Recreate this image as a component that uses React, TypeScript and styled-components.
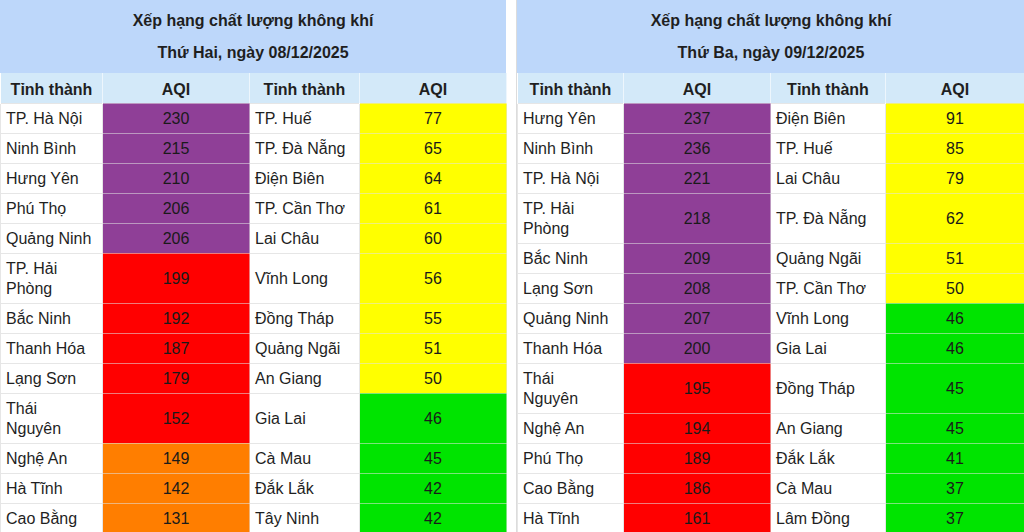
import React from "react";
import styled, { createGlobalStyle } from "styled-components";

const Global = createGlobalStyle`
  html, body { margin: 0; padding: 0; background: #ffffff; }
  body { font-family: "Liberation Sans", Arial, sans-serif; color: #1f1f1f; }
`;

type Level = "purple" | "red" | "orange" | "yellow" | "green";

const levelColor: Record<Level, string> = {
  purple: "#8f3f97",
  red: "#ff0000",
  orange: "#ff7e00",
  yellow: "#ffff00",
  green: "#00e400",
};

const level = (v: number): Level =>
  v >= 200 ? "purple" : v >= 150 ? "red" : v >= 100 ? "orange" : v >= 50 ? "yellow" : "green";

type Row = [string, number, string, number];

const Page = styled.div`
  display: flex;
  align-items: flex-start;
  gap: 10px;
  width: 1024px;
  height: 532px;
  overflow: hidden;
`;

const Panel = styled.div<{ $w: number; $divider?: boolean }>`
  width: ${(p) => p.$w}px;
  flex: none;
  border-left: ${(p) => (p.$divider ? "1px solid #dcdcdc" : "none")};
`;

const Title = styled.div`
  background: #bdd7fa;
  padding: 5px 0 4px;
  text-align: center;
  font-weight: bold;
  font-size: 16px;
`;

const TitleLine = styled.div`
  line-height: 32px;
  height: 32px;
`;

const Table = styled.table`
  width: 100%;
  border-collapse: collapse;
  table-layout: fixed;
  font-size: 16px;
`;

const HeadRow = styled.tr`
  height: 30px;
`;

const HeadCell = styled.th`
  background: #d3e9f9;
  padding: 4px 0 0;
  line-height: 20px;
  font-weight: bold;
  text-align: center;
  border-left: 1px solid rgba(255, 255, 255, 0.6);
  border-right: 1px solid rgba(255, 255, 255, 0.6);
`;

const NameCell = styled.td`
  background: #ffffff;
  padding: 5px 6px 4px 5px;
  line-height: 20px;
  text-align: left;
  vertical-align: middle;
  border: 1px solid #e6e6e6;
`;

const AqiCell = styled.td<{ $level: Level }>`
  background: ${(p) => levelColor[p.$level]};
  padding: 5px 0 4px;
  line-height: 20px;
  text-align: center;
  vertical-align: middle;
  color: #1a1a1a;
  border: 1px solid rgba(225, 225, 225, 0.55);
`;

const Name: React.FC<{ text: string }> = ({ text }) => {
  const parts = text.split("|");
  return (
    <>
      {parts.map((p, i) => (
        <React.Fragment key={i}>
          {i > 0 && <br />}
          {p}
        </React.Fragment>
      ))}
    </>
  );
};

const AirTable: React.FC<{
  width: number;
  cols: number[];
  day: string;
  rows: Row[];
  divider?: boolean;
}> = ({ width, cols, day, rows, divider }) => (
  <Panel $w={width} $divider={divider}>
    <Title>
      <TitleLine>Xếp hạng chất lượng không khí</TitleLine>
      <TitleLine>{day}</TitleLine>
    </Title>
    <Table>
      <colgroup>
        {cols.map((c, i) => (
          <col key={i} style={{ width: c }} />
        ))}
      </colgroup>
      <thead>
        <HeadRow>
          <HeadCell>Tỉnh thành</HeadCell>
          <HeadCell>AQI</HeadCell>
          <HeadCell>Tỉnh thành</HeadCell>
          <HeadCell>AQI</HeadCell>
        </HeadRow>
      </thead>
      <tbody>
        {rows.map((r, i) => (
          <tr key={i}>
            <NameCell>
              <Name text={r[0]} />
            </NameCell>
            <AqiCell $level={level(r[1])}>{r[1]}</AqiCell>
            <NameCell>
              <Name text={r[2]} />
            </NameCell>
            <AqiCell $level={level(r[3])}>{r[3]}</AqiCell>
          </tr>
        ))}
      </tbody>
    </Table>
  </Panel>
);

const monday: Row[] = [
  ["TP. Hà Nội", 230, "TP. Huế", 77],
  ["Ninh Bình", 215, "TP. Đà Nẵng", 65],
  ["Hưng Yên", 210, "Điện Biên", 64],
  ["Phú Thọ", 206, "TP. Cần Thơ", 61],
  ["Quảng Ninh", 206, "Lai Châu", 60],
  ["TP. Hải|Phòng", 199, "Vĩnh Long", 56],
  ["Bắc Ninh", 192, "Đồng Tháp", 55],
  ["Thanh Hóa", 187, "Quảng Ngãi", 51],
  ["Lạng Sơn", 179, "An Giang", 50],
  ["Thái|Nguyên", 152, "Gia Lai", 46],
  ["Nghệ An", 149, "Cà Mau", 45],
  ["Hà Tĩnh", 142, "Đắk Lắk", 42],
  ["Cao Bằng", 131, "Tây Ninh", 42],
];

const tuesday: Row[] = [
  ["Hưng Yên", 237, "Điện Biên", 91],
  ["Ninh Bình", 236, "TP. Huế", 85],
  ["TP. Hà Nội", 221, "Lai Châu", 79],
  ["TP. Hải|Phòng", 218, "TP. Đà Nẵng", 62],
  ["Bắc Ninh", 209, "Quảng Ngãi", 51],
  ["Lạng Sơn", 208, "TP. Cần Thơ", 50],
  ["Quảng Ninh", 207, "Vĩnh Long", 46],
  ["Thanh Hóa", 200, "Gia Lai", 46],
  ["Thái|Nguyên", 195, "Đồng Tháp", 45],
  ["Nghệ An", 194, "An Giang", 45],
  ["Phú Thọ", 189, "Đắk Lắk", 41],
  ["Cao Bằng", 186, "Cà Mau", 37],
  ["Hà Tĩnh", 161, "Lâm Đồng", 37],
];

export default function App() {
  return (
    <>
      <Global />
      <Page>
        <AirTable width={506} cols={[102, 147, 110, 147]} day="Thứ Hai, ngày 08/12/2025" rows={monday} />
        <AirTable width={508} cols={[106, 147, 115, 139]} day="Thứ Ba, ngày 09/12/2025" rows={tuesday} divider />
      </Page>
    </>
  );
}
